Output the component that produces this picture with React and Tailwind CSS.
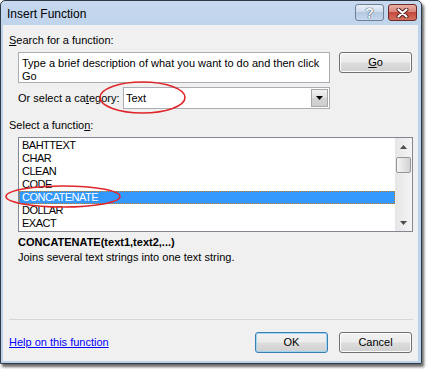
import React from "react";

const FUNCTIONS = ["BAHTTEXT", "CHAR", "CLEAN", "CODE", "CONCATENATE", "DOLLAR", "EXACT"];
const SELECTED = "CONCATENATE";

function DialogButton({ children, primary = false, className = "" }) {
  return (
    <div
      className={`h-[21px] w-[73px] rounded-[3px] border flex items-center justify-center text-[11px] text-black bg-[linear-gradient(#f2f2f2_0%,#ebebeb_48%,#dddddd_52%,#cfcfcf_100%)] ${
        primary
          ? "border-[#3c7fb1] shadow-[inset_0_0_0_1px_#9fd5f2]"
          : "border-[#707070] shadow-[inset_0_0_0_1px_#fbfbfb]"
      } ${className}`}
    >
      {children}
    </div>
  );
}

function Triangle({ up = false, color = "#4d4d4d" }) {
  return (
    <svg width="7" height="4" viewBox="0 0 7 4">
      <path d={up ? "M0 4 L3.5 0 L7 4 Z" : "M0 0 L7 0 L3.5 4 Z"} fill={color} />
    </svg>
  );
}

export default function App() {
  return (
    <div className="relative w-[427px] h-[369px] bg-white [font-family:'Liberation_Sans',Arial,sans-serif] text-[11px] text-black">
      {/* Window */}
      <div className="w-[422px] h-[364px] flex flex-col border border-[#2f3a46] rounded-t-[5px] pl-[2px] pr-[3px] pb-[2px] bg-[linear-gradient(#c5d8ee,#bcd1ea_40px,#bcd1ea)] shadow-[2px_3px_3px_rgba(0,0,0,0.6)]">
        {/* Title bar */}
        <div className="h-[24px] flex items-start shrink-0">
          <span className="ml-[4px] mt-[5px] text-[12px] leading-[16px] text-black">Insert Function</span>
          <div className="ml-auto mt-[3px] mr-[1px] flex gap-[4px]">
            <div className="w-[29px] h-[17px] rounded-[3px] border border-[#6f7f93] bg-[linear-gradient(#e8eff8,#cfdcec_45%,#b4c8e0_50%,#c6d8ed)] flex items-center justify-center">
              <span className="text-[14px] font-bold leading-none text-[#f4f8fc] [text-shadow:0_0_1px_#2d3e55,0_0_1px_#2d3e55]">?</span>
            </div>
            <div className="w-[29px] h-[17px] rounded-[3px] border border-[#6b2a26] bg-[linear-gradient(#eab0a6,#d6867a_45%,#c54a3d_50%,#d3705f)] flex items-center justify-center">
              <svg width="13" height="10" viewBox="0 0 13 10">
                <path d="M2.5 1.5 L10.5 8.5 M10.5 1.5 L2.5 8.5" stroke="#4a1a16" strokeWidth="4" strokeLinecap="round" />
                <path d="M2.5 1.5 L10.5 8.5 M10.5 1.5 L2.5 8.5" stroke="#ffffff" strokeWidth="2.2" strokeLinecap="round" />
              </svg>
            </div>
          </div>
        </div>

        {/* Content */}
        <div className="flex-1 flex flex-col bg-[#f0f0f0] pt-[8px]">
          <div className="ml-[6px] h-[15px] leading-[15px]">
            <span className="underline">S</span>earch for a function:
          </div>

          <div className="mt-[4px] flex items-start h-[31px]">
            <div className="ml-[15px] w-[312px] h-[31px] bg-white border border-[#abadb3] pl-[3px] pt-[4px] leading-[13px] whitespace-nowrap overflow-hidden">
              Type a brief description of what you want to do and then click
              <br />
              Go
            </div>
            <DialogButton className="ml-[9px]">
              <span>
                <span className="underline">G</span>o
              </span>
            </DialogButton>
          </div>

          <div className="mt-[4px] flex items-center h-[22px]">
            <div className="ml-[15px] w-[105px] whitespace-nowrap">
              Or select a ca<span className="underline">t</span>egory:
            </div>
            <div className="w-[207px] h-[22px] bg-white border border-[#abadb3] flex items-center">
              <span className="ml-[2px]">Text</span>
              <div className="ml-auto mr-[1px] w-[17px] h-[18px] border border-[#a7a7a7] bg-[linear-gradient(#f2f2f2,#e0e0e0_50%,#d4d4d4_50%,#cfcfcf)] flex items-center justify-center">
                <Triangle color="#000000" />
              </div>
            </div>
          </div>

          <div className="mt-[9px] ml-[6px] h-[15px] leading-[15px]">
            Select a functio<span className="underline">n</span>:
          </div>

          <div className="mt-[4px] ml-[15px] w-[395px] h-[95px] bg-white border border-[#828790] flex">
            <div className="flex-1 pt-[1px] flex flex-col">
              {FUNCTIONS.map((name) => (
                <div
                  key={name}
                  className={`h-[13px] leading-[13px] pl-[3px] tracking-[-0.5px] ${
                    name === SELECTED
                      ? "bg-[#3399ff] text-white outline-1 outline-dotted outline-[#c77d1f] -outline-offset-1"
                      : ""
                  }`}
                >
                  {name}
                </div>
              ))}
            </div>
            <div className="w-[17px] h-full bg-[linear-gradient(90deg,#e6e6e6,#f4f4f4)] flex flex-col items-center">
              <div className="h-[17px] w-full flex items-center justify-center">
                <Triangle up />
              </div>
              <div className="mt-[2px] w-[15px] h-[16px] rounded-[2px] border border-[#979797] bg-[linear-gradient(90deg,#f5f5f5,#e4e4e4_50%,#d2d2d2)]" />
              <div className="flex-1" />
              <div className="h-[17px] w-full flex items-center justify-center">
                <Triangle />
              </div>
            </div>
          </div>

          <div className="mt-[3px] ml-[15px] h-[15px] leading-[15px] font-bold">
            CONCATENATE(text1,text2,...)
          </div>
          <div className="ml-[15px] h-[15px] leading-[15px]">
            Joins several text strings into one text string.
          </div>

          <div className="flex-1" />
          <div className="ml-[6px] w-[404px] h-px bg-[#d5d5d5]" />

          <div className="h-[41px] flex items-start pt-[12px]">
            <span className="ml-[6px] mt-[3px] leading-[15px] text-[#0000ff] underline">Help on this function</span>
            <div className="ml-auto mr-[6px] flex gap-[11px]">
              <DialogButton primary>OK</DialogButton>
              <DialogButton>Cancel</DialogButton>
            </div>
          </div>
        </div>
      </div>

      {/* Red annotation ellipses drawn over the dialog */}
      <svg className="absolute left-0 top-0 pointer-events-none" width="427" height="369" viewBox="0 0 427 369">
        <ellipse cx="142.5" cy="97.5" rx="42.5" ry="15.5" fill="none" stroke="#e0262b" strokeWidth="1.6" />
        <ellipse cx="63" cy="196.5" rx="57" ry="10.5" fill="none" stroke="#e0262b" strokeWidth="1.6" />
      </svg>
    </div>
  );
}
